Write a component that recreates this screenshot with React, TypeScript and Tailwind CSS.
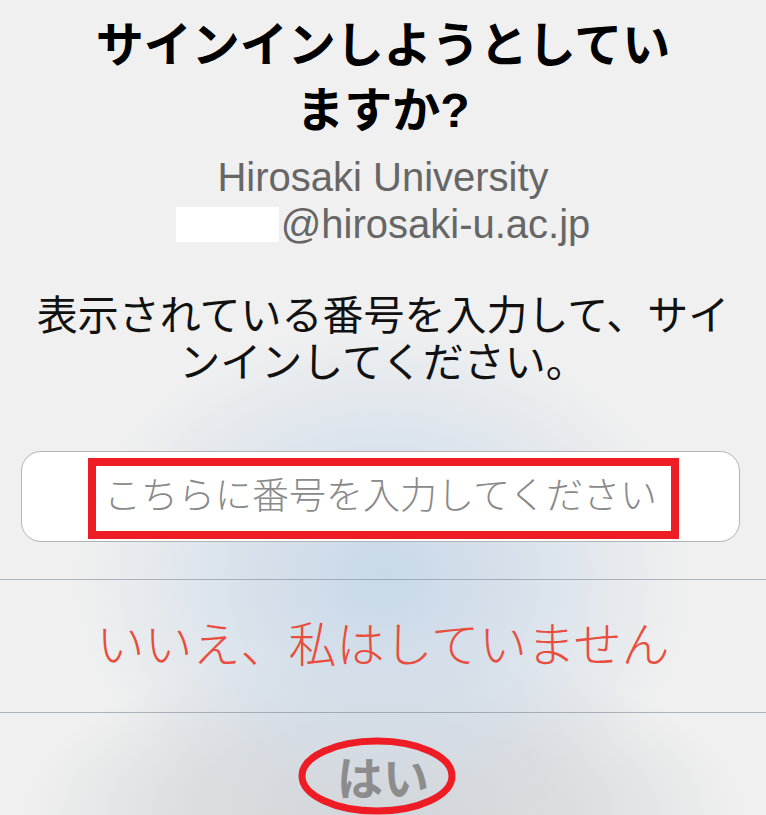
export default function App() {
  return (
    <div className="relative h-[815px] w-full overflow-hidden bg-[#f0f0f0] bg-[image:radial-gradient(ellipse_310px_260px_at_50%_71%,#c9d9e8_0%,rgba(205,219,233,0.75)_40%,transparent_100%),radial-gradient(ellipse_360px_170px_at_50%_100%,#d2d5d8_0%,rgba(212,214,217,0.7)_55%,transparent_100%)] font-['Liberation_Sans','Noto_Sans_CJK_JP',sans-serif]">
      {/* heading */}
      <h1 className="mx-auto w-[600px] pt-[13px] text-center text-[48px] font-bold leading-[65px] text-black">
        サインインしようとしていますか?
      </h1>

      <div className="mt-[11px] text-center text-[40px] leading-[47px] text-[#666666]">
        <p>Hirosaki University</p>
        <p className="flex items-center justify-center">
          <span className="mr-[2px] inline-block h-[35px] w-[103px] bg-white" />
          <span>@hirosaki-u.ac.jp</span>
        </p>
      </div>

      <p className="mx-auto mt-[45px] w-[712px] text-center text-[41px] leading-[47px] text-[#111111]">
        表示されている番号を入力して、サインインしてください。
      </p>

      {/* code input */}
      <div className="relative ml-[21px] mt-[64px] flex h-[91px] w-[719px] items-center justify-center rounded-[20px] border border-[#b4b4b4] bg-white">
        <span className="text-[37px] font-light leading-none text-[#8a8a8a]">こちらに番号を入力してください</span>
        <div className="pointer-events-none absolute left-[66px] top-[6px] h-[81px] w-[591px] border-[8px] border-[#ee1c25]" />
      </div>

      <div className="mt-[37px] border-t border-[rgba(120,130,140,0.55)]">
        <div className="flex h-[132px] items-center justify-center text-[48px] font-light text-[#e84d3d]">
          いいえ、私はしていません
        </div>
      </div>

      <div className="relative border-t border-[rgba(120,130,140,0.55)]">
        <div className="flex h-[132px] items-center justify-center text-[46px] font-bold text-[#8c8c8c]">
          はい
        </div>
        <svg
          className="pointer-events-none absolute left-[297px] top-[23px]"
          width="160"
          height="80"
          viewBox="0 0 160 80"
        >
          <ellipse cx="80" cy="40" rx="75" ry="35" fill="none" stroke="#ee1c25" strokeWidth="7" />
        </svg>
      </div>
    </div>
  )
}
